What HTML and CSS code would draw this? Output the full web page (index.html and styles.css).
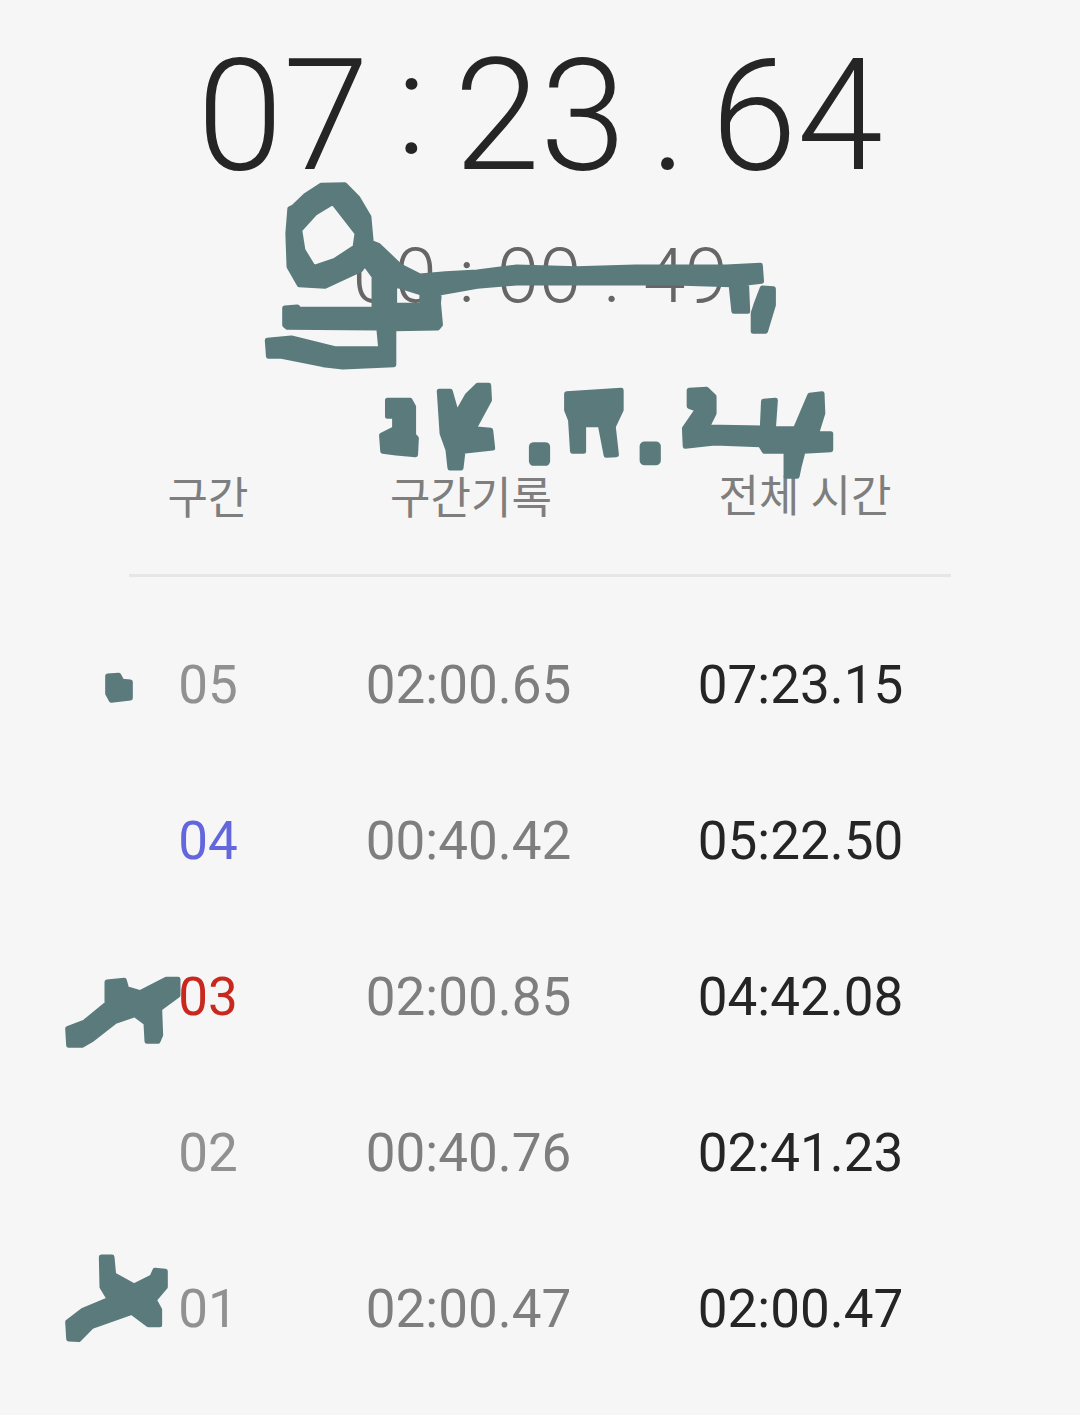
FILE: index.html
```html
<!DOCTYPE html>
<html lang="ko">
<head>
    <meta charset="UTF-8">
    <meta name="viewport" content="width=device-width, initial-scale=1.0">
    <title>스톱워치</title>
    <link rel="stylesheet" href="styles.css">
</head>
<body>
    <div class="screen">
        <div class="timer">
            <div class="timer-main">
                <span>07</span><span class="sep colon">:</span><span>23</span><span class="sep">.</span><span>64</span>
            </div>
            <div class="timer-sub">
                <span>00</span><span class="sep">:</span><span>00</span><span class="sep">.</span><span>49</span>
            </div>
        </div>

        <div class="laps">
            <div class="lap-head">
                <span>구간</span>
                <span>구간기록</span>
                <span class="lap-head-total">전체 시간</span>
            </div>

            <div class="lap-row">
                <span class="lap-no">05</span>
                <span class="lap-time">02:00.65</span>
                <span class="lap-total">07:23.15</span>
            </div>
            <div class="lap-row">
                <span class="lap-no fastest">04</span>
                <span class="lap-time">00:40.42</span>
                <span class="lap-total">05:22.50</span>
            </div>
            <div class="lap-row">
                <span class="lap-no slowest">03</span>
                <span class="lap-time">02:00.85</span>
                <span class="lap-total">04:42.08</span>
            </div>
            <div class="lap-row">
                <span class="lap-no">02</span>
                <span class="lap-time">00:40.76</span>
                <span class="lap-total">02:41.23</span>
            </div>
            <div class="lap-row">
                <span class="lap-no">01</span>
                <span class="lap-time">02:00.47</span>
                <span class="lap-total">02:00.47</span>
            </div>
        </div>

        <!-- 손으로 그린 낙서 -->
        <svg class="scribble" viewBox="0 0 1080 1415" aria-hidden="true">
            <g transform="translate(240 170) scale(0.3954 0.3333)">
                <path fill-rule="evenodd" d="M205 46 L265 44 L298 84 L326 140 L332 218 L350 226 L405 288 L455 318 L520 311 L600 306 L700 291 L850 296 L1000 291 L1100 291 L1230 291 L1316 286 L1319 334 L1281 339 L1284 424 L1249 424 L1242 344 L1100 339 L900 339 L700 339 L600 349 L504 369 L502 400 L507 464 L500 474 L389 476 L389 584 L260 591 L210 584 L105 559 L72 559 L69 511 L130 504 L240 536 L356 536 L351 474 L120 472 L113 465 L113 414 L145 411 L150 418 L339 418 L339 320 L316 282 L305 299 L215 349 L150 344 L124 290 L121 190 L126 116 L135 111 L166 76 Z M235 97 L296 190 L291 231 L240 271 L186 293 L159 240 L151 180 L190 129 Z M391 344 L460 369 L460 406 L391 406 Z"/>
                <path d="M1321 354 L1349 356 L1349 405 L1329 484 L1298 484 L1298 430 L1306 400 Z"/>
                <path d="M373 691 L430 691 L439 710 L439 796 L446 805 L444 854 L395 849 L361 844 L358 796 L391 776 L391 739 L373 739 Z"/>
                <path d="M504 664 L532 664 L548 732 L575 676 L601 646 L629 646 L631 690 L592 776 L634 781 L639 834 L564 844 L559 894 L531 894 L526 840 L511 790 Z"/>
                <rect x="737" y="824" width="41" height="56" rx="6"/>
                <rect x="1017" y="822" width="41" height="56" rx="6"/>
                <path d="M826 671 L964 661 L964 720 L944 770 L952 854 L926 856 L911 764 L869 764 L869 844 L841 844 L836 750 L826 720 Z"/>
                <path d="M1136 661 L1180 658 L1199 680 L1199 730 L1182 771 L1321 774 L1324 694 L1354 691 L1349 776 L1405 776 L1441 676 L1472 671 L1474 730 L1458 791 L1494 791 L1494 839 L1424 844 L1414 890 L1409 919 L1381 919 L1381 844 L1326 844 L1316 824 L1200 819 L1126 829 L1124 775 L1157 718 L1136 709 Z"/>
            </g>
            <g transform="translate(90 460) scale(0.3333)">
                <path d="M53 648 L86 646 L96 664 L121 666 L121 714 L64 721 L53 701 Z"/>
            </g>
            <g transform="translate(50 960) scale(0.3333)">
                <path d="M171 66 L223 61 L230 86 L270 98 L349 58 L384 58 L384 106 L329 146 L332 225 L324 244 L291 244 L288 189 L255 164 L196 184 L126 239 L96 256 L56 256 L53 206 L104 186 L171 131 Z"/>
                <path d="M154 891 L186 891 L191 944 L252 978 L306 951 L315 931 L346 934 L346 981 L313 1020 L329 1049 L329 1094 L295 1094 L245 1057 L126 1099 L86 1139 L56 1137 L53 1086 L99 1051 L178 1018 L156 981 Z"/>
            </g>
        </svg>
    </div>
</body>
</html>
```

FILE: styles.css
```css
:root {
    --bg: #f6f6f6;
    --text-dark: #252525;
    --text-sub: #666;
    --text-gray: #7e7e7e;
    --lap-no: #919191;
    --divider: #e6e6e6;
    --scribble: #5b7a7c;
}

body {
    margin: 0;
    background: var(--bg);
    font-family: Roboto, "Noto Sans CJK KR", sans-serif;
}

.screen {
    position: relative;
    width: 1080px;
    height: 1415px;
    overflow: hidden;
}

.timer {
    padding-top: 25px;
    text-align: center;
}

.timer-main {
    display: flex;
    justify-content: center;
    height: 182px;
    font-size: 155px;
    font-weight: 300;
    line-height: 182px;
    color: var(--text-dark);
}

.timer-main .sep {
    width: 85px;
    text-align: center;
}

.timer-main .colon {
    margin-top: -12px;
    font-size: 143px;
}

.timer-sub {
    display: flex;
    justify-content: center;
    gap: 22px;
    height: 90px;
    margin-top: 24px;
    font-size: 76px;
    font-weight: 300;
    line-height: 90px;
    color: var(--text-sub);
}

.laps {
    margin: 0 129px;
    padding-top: 151px;
}

.lap-head {
    display: grid;
    grid-template-columns: 158px 368px 1fr;
    padding-bottom: 47px;
    border-bottom: 3px solid var(--divider);
    font-size: 44px;
    line-height: 55px;
    text-align: center;
    color: var(--text-gray);
}

.lap-head-total {
    margin-top: -2px;
    padding-left: 4px;
}

.lap-row {
    display: grid;
    grid-template-columns: 158px 363px 1fr;
    height: 156px;
    font-size: 53px;
    line-height: 156px;
    text-align: center;
    color: var(--text-gray);
}

.lap-head + .lap-row {
    margin-top: 30px;
}

.lap-no {
    color: var(--lap-no);
}

.lap-no.fastest {
    color: #6366dc;
}

.lap-no.slowest {
    color: #c8281e;
}

.lap-total {
    color: var(--text-dark);
}

/* 둥근 펜 느낌은 stroke로 */
.scribble {
    position: absolute;
    top: 0;
    left: 0;
    width: 1080px;
    height: 1415px;
    fill: var(--scribble);
    stroke: var(--scribble);
    stroke-width: 5px;
    stroke-linejoin: round;
}

.scribble path,
.scribble rect {
    vector-effect: non-scaling-stroke;
}
```
